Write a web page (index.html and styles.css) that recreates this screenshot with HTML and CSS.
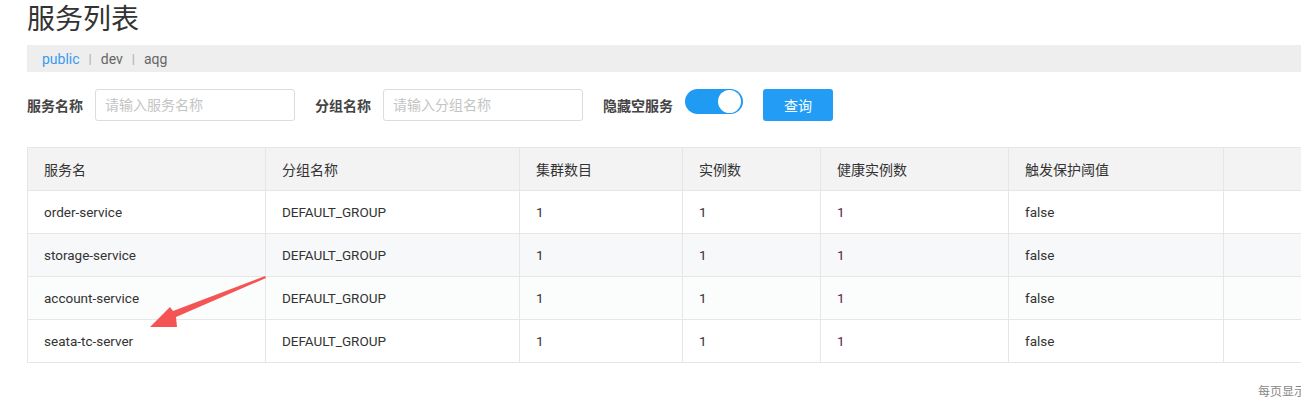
FILE: index.html
```html
<html lang="zh-CN">
<head>
    <meta charset="UTF-8">
    <meta name="viewport" content="width=device-width, initial-scale=1.0">
    <title>服务列表</title>
    <link rel="stylesheet" href="styles.css">
</head>
<body>

    <div class="page">
        <h1 class="title">服务列表</h1>

        <!-- namespaces -->
        <div class="ns-bar">
            <span class="ns active">public</span>
            <span class="sep">|</span>
            <span class="ns">dev</span>
            <span class="sep">|</span>
            <span class="ns">aqg</span>
        </div>

        <!-- search form -->
        <div class="filters">
            <label class="lbl" for="serviceName">服务名称</label>
            <input type="text" id="serviceName" class="field" placeholder="请输入服务名称">
            <label class="lbl" for="groupName">分组名称</label>
            <input type="text" id="groupName" class="field" placeholder="请输入分组名称">
            <span class="lbl">隐藏空服务</span>
            <span class="switch"><span class="knob"></span></span>
            <button class="btn">查询</button>
        </div>

        <!-- table -->
        <div class="table-wrap">
            <table class="svc-table">
                <thead>
                    <tr>
                        <th class="c-name">服务名</th>
                        <th class="c-group">分组名称</th>
                        <th class="c-cluster">集群数目</th>
                        <th class="c-inst">实例数</th>
                        <th class="c-health">健康实例数</th>
                        <th class="c-prot">触发保护阈值</th>
                        <th class="c-op"></th>
                    </tr>
                </thead>
                <tbody>
                    <tr>
                        <td>order-service</td><td>DEFAULT_GROUP</td><td>1</td><td>1</td><td class="health">1</td><td>false</td><td></td>
                    </tr>
                    <tr class="alt">
                        <td>storage-service</td><td>DEFAULT_GROUP</td><td>1</td><td>1</td><td class="health">1</td><td>false</td><td></td>
                    </tr>
                    <tr class="hover">
                        <td>account-service</td><td>DEFAULT_GROUP</td><td>1</td><td>1</td><td class="health">1</td><td>false</td><td></td>
                    </tr>
                    <tr>
                        <td>seata-tc-server</td><td>DEFAULT_GROUP</td><td>1</td><td>1</td><td class="health">1</td><td>false</td><td></td>
                    </tr>
                </tbody>
            </table>

            <!-- annotation arrow drawn over the table -->
            <svg class="arrow" width="130" height="60" viewBox="0 0 130 60">
                <polygon points="125,0 126,2 36,41 37,51 10,51 30,31 33,35" fill="#f45454"/>
            </svg>
        </div>

        <div class="pager">每页显示</div>
    </div>

</body>
</html>
```

FILE: styles.css
```css
* {
    box-sizing: border-box;
}

html, body {
    margin: 0;
    overflow: hidden;
    background: #fff;
}

body {
    font-family: Roboto, "Noto Sans CJK SC", sans-serif;
    color: #333;
    font-size: 14px;
}

.page {
    width: 1360px;
    padding-left: 27px;
}

.title {
    margin: 0;
    height: 45px;
    font-size: 28px;
    font-weight: normal;
    line-height: 39px;
    color: #333;
}

.ns-bar {
    display: flex;
    align-items: center;
    height: 27px;
    padding-left: 15px;
    background: #eee;
    font-size: 14px;
    color: #666;
}

.ns-bar .ns.active {
    color: #3a9bf0;
}

.ns-bar .sep {
    color: #aaa;
    margin: 0 9px;
    font-size: 13px;
}

.filters {
    display: flex;
    align-items: center;
    height: 32px;
    margin-top: 17px;
}

.lbl {
    font-weight: bold;
    font-size: 14px;
    color: #444;
    margin-right: 12px;
}

.field {
    width: 200px;
    height: 32px;
    padding: 0 9px;
    border: 1px solid #dcdcdc;
    border-radius: 3px;
    font-size: 14px;
    font-family: Roboto, "Noto Sans CJK SC", sans-serif;
    margin-right: 20px;
    outline: none;
}

.field::placeholder {
    color: #c4c4c4;
}

.switch {
    display: flex;
    align-items: center;
    justify-content: flex-end;
    width: 58px;
    height: 25px;
    padding: 0 2px;
    border-radius: 13px;
    background: #1f9bf4;
    margin-right: 20px;
    margin-top: -7px;
}

.knob {
    width: 23px;
    height: 23px;
    border-radius: 50%;
    background: #fff;
}

.btn {
    width: 70px;
    height: 32px;
    border: none;
    border-radius: 3px;
    background: #229cf5;
    color: #fff;
    font-size: 14px;
    font-family: Roboto, "Noto Sans CJK SC", sans-serif;
}

.table-wrap {
    position: relative;
    margin-top: 26px;
}

.svc-table {
    border-collapse: collapse;
    table-layout: fixed;
    width: 1320px;
    font-size: 14px;
}

.svc-table th,
.svc-table td {
    height: 43px;
    padding: 0 16px 1px;
    border: 1px solid #e6e6e6;
    text-align: left;
    font-weight: normal;
    color: #333;
    white-space: nowrap;
}

.svc-table td {
    font-size: 13.5px;
}

.svc-table thead tr {
    background: #f3f3f4;
}

.svc-table tr.alt {
    background: #f7f8fa;
}

.svc-table tr.hover {
    background: #fbfcfc;
}

.svc-table td.health {
    color: #5a2446;
}

.c-name { width: 238px; }
.c-group { width: 254px; }
.c-cluster { width: 163px; }
.c-inst { width: 138px; }
.c-health { width: 188px; }
.c-prot { width: 215px; }

.arrow {
    position: absolute;
    left: 113px;
    top: 129px;
}

.pager {
    margin-top: 19px;
    margin-left: 1231px;
    font-size: 12px;
    color: #888;
    white-space: nowrap;
}
```
